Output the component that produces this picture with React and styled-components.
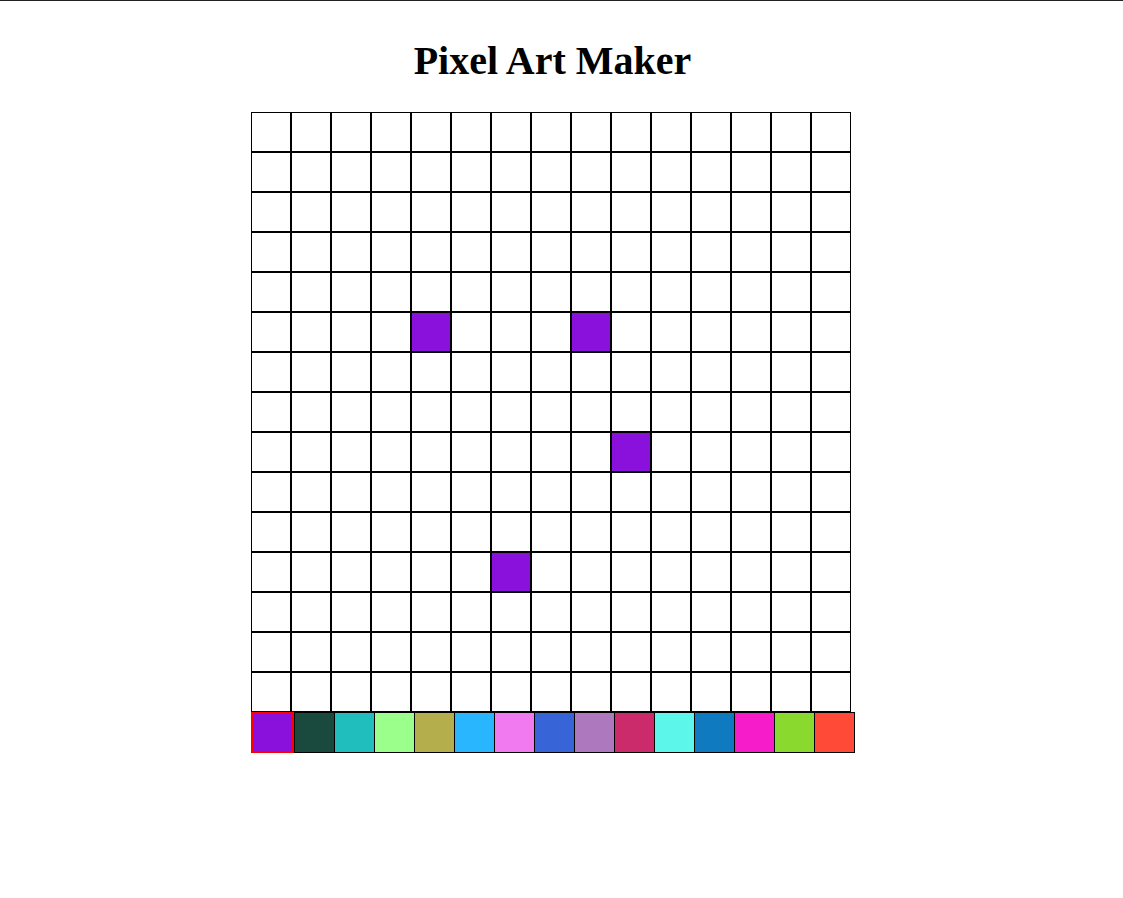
import React, { useState } from "react";
import styled, { createGlobalStyle } from "styled-components";

const GlobalStyle = createGlobalStyle`
  html, body {
    margin: 0;
    padding: 0;
    background: #ffffff;
  }
  body {
    border-top: 1px solid #222222;
    font-family: "Liberation Serif", "Times New Roman", serif;
    color: #000000;
  }
`;

const Page = styled.main`
  display: flex;
  flex-direction: column;
  align-items: center;
  padding-right: 21px;
`;

const Title = styled.h1`
  margin: 38px 0 29px;
  padding-left: 3px;
  font-family: "Liberation Serif", "Times New Roman", serif;
  font-size: 40px;
  line-height: 44px;
  font-weight: bold;
  text-align: center;
`;

const Board = styled.div`
  display: flex;
  flex-direction: column;
  align-items: flex-start;
  width: 600px;
`;

const Grid = styled.div`
  display: grid;
  grid-template-columns: repeat(${(p) => p.$cols}, 40px);
  grid-auto-rows: 40px;
`;

const Cell = styled.div`
  box-sizing: border-box;
  width: 40px;
  height: 40px;
  border: 1px solid #000000;
  background: ${(p) => p.$color || "#ffffff"};
  cursor: pointer;
`;

const Palette = styled.div`
  display: flex;
  align-items: flex-start;
`;

const Swatch = styled.div`
  box-sizing: border-box;
  height: 41px;
  width: ${(p) => (p.$selected ? "43px" : "41px")};
  border: ${(p) => (p.$selected ? "2px solid #ff0000" : "1px solid #000000")};
  margin-left: ${(p) => (p.$first || p.$afterSelected ? "0" : "-1px")};
  background: ${(p) => p.$color};
  cursor: pointer;
`;

const COLORS = [
  "#8a11dc",
  "#1a4a3e",
  "#20bebc",
  "#9bff8c",
  "#b5ae4c",
  "#2ab6ff",
  "#f27af0",
  "#3764d6",
  "#ae78be",
  "#cc2b6b",
  "#5cf7ea",
  "#0f7abf",
  "#f61cca",
  "#8ad92f",
  "#ff4a38",
];

const SIZE = 15;

const initialPainted = {
  "5-4": "#8a11dc",
  "5-8": "#8a11dc",
  "8-9": "#8a11dc",
  "11-6": "#8a11dc",
};

export default function App() {
  const [selected, setSelected] = useState(0);
  const [painted, setPainted] = useState(initialPainted);

  const paint = (r, c) => {
    setPainted((prev) => ({ ...prev, [`${r}-${c}`]: COLORS[selected] }));
  };

  const cells = [];
  for (let r = 0; r < SIZE; r++) {
    for (let c = 0; c < SIZE; c++) {
      cells.push(
        <Cell
          key={`${r}-${c}`}
          $color={painted[`${r}-${c}`]}
          onClick={() => paint(r, c)}
        />
      );
    }
  }

  return (
    <>
      <GlobalStyle />
      <Page>
        <Title>Pixel Art Maker</Title>
        <Board>
          <Grid $cols={SIZE}>{cells}</Grid>
          <Palette>
            {COLORS.map((color, i) => (
              <Swatch
                key={color}
                $color={color}
                $selected={i === selected}
                $first={i === 0}
                $afterSelected={i === selected + 1}
                onClick={() => setSelected(i)}
              />
            ))}
          </Palette>
        </Board>
      </Page>
    </>
  );
}
